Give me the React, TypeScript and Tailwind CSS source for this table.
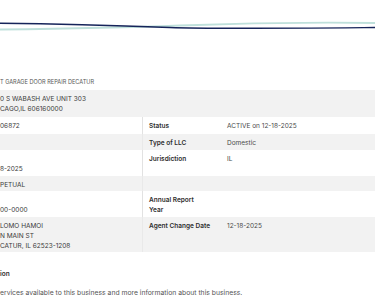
const rows: { left: string[]; label?: string[]; value?: string; h: string; gray?: boolean }[] = [
  { left: ['06872'], label: ['Status'], value: 'ACTIVE on 12-18-2025', h: 'h-[17px]' },
  { left: [''], label: ['Type of LLC'], value: 'Domestic', h: 'h-[16px]', gray: true },
  { left: ['', '8-2025'], label: ['Jurisdiction'], value: 'IL', h: 'h-[26px]' },
  { left: ['PETUAL'], h: 'h-[15px]', gray: true },
  { left: ['', '00-0000'], label: ['Annual Report', 'Year'], h: 'h-[26px]' },
  { left: ['LOMO HAMOI', 'N MAIN ST', 'CATUR, IL 62523-1208'], label: ['Agent Change Date'], value: '12-18-2025', h: 'h-[35px]', gray: true },
]

export default function App() {
  return (
    <div className="w-[375px] h-[302px] overflow-hidden bg-white font-['Inter',sans-serif] text-[6.5px] text-[#3a3a3a]">
      <svg width="375" height="40" viewBox="0 0 375 40" className="block">
        <path d="M0 29.5 C 80 28.5, 140 27, 180 25.5 S 290 22, 375 23" fill="none" stroke="#bfe0db" strokeWidth="1.8" />
        <path d="M0 23.3 C 70 24, 130 26, 170 27.5 S 260 28.5, 375 27.5" fill="none" stroke="#16245a" strokeWidth="1.4" />
      </svg>

      <div className="h-[50px] flex items-end pb-[3px] leading-[10px] text-[5.6px] text-[#555]">T GARAGE DOOR REPAIR DECATUR</div>

      <div className="bg-[#f2f2f2] py-[3.5px] leading-[10px]">
        <div>0 S WABASH AVE UNIT 303</div>
        <div>CAGO,IL 606160000</div>
      </div>

      {rows.map((r, i) => (
        <div key={i} className={`flex ${r.h} ${r.gray ? 'bg-[#f2f2f2]' : 'bg-white'} leading-[10px]`}>
          <div className="w-[142px] pt-[3.5px]">
            {r.left.map((l, j) => <div key={j} className="h-[10px]">{l}</div>)}
          </div>
          <div className={`flex-1 flex pt-[3.5px] pl-[6px] border-l ${r.gray ? 'border-[#e9e9e9]' : 'border-[#e2e2e2]'}`}>
            <div className="w-[78px] font-semibold text-[#2e2e2e]">
              {r.label?.map((l, j) => <div key={j}>{l}</div>)}
            </div>
            <div className="text-[#4a4a4a]">{r.value}</div>
          </div>
        </div>
      ))}

      <div className="mt-[17px] leading-[10px] font-semibold text-[#2e2e2e]">ion</div>
      <div className="mt-[9px] leading-[10px] text-[6.8px] text-[#555]">ervices available to this business and more information about this business.</div>
    </div>
  )
}
